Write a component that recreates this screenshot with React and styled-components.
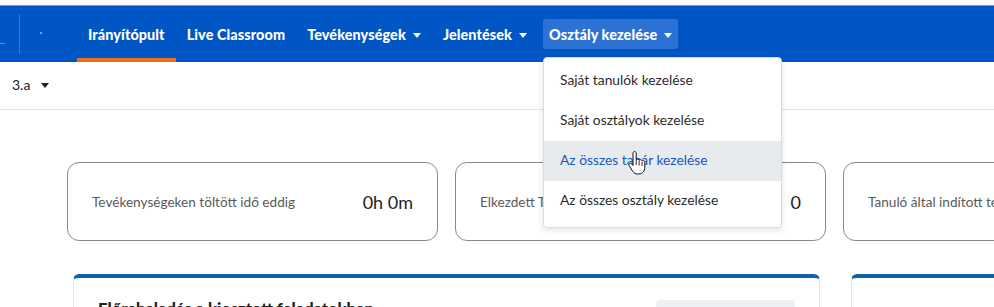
import React from 'react'
import styled, { createGlobalStyle } from 'styled-components'

const GlobalStyle = createGlobalStyle`
  body {
    margin: 0;
    background: #ffffff;
    font-family: Lato, "Noto Sans", sans-serif;
    overflow: hidden;
  }
`

const Page = styled.div`
  width: 994px;
  height: 307px;
  overflow: hidden;
  position: relative;
`

const TopStrip = styled.div`
  height: 5px;
  background: #ffffff;
  border-bottom: 1px solid #6f9be0;
`

const NavBar = styled.nav`
  height: 56px;
  background: #0156c6;
  display: flex;
  align-items: stretch;
`

const Brand = styled.div`
  width: 77px;
  flex: 0 0 77px;
  display: flex;
  align-items: center;
`

const BrandMark = styled.span`
  width: 5px;
  height: 1px;
  background: #7c8fb0;
  margin-top: 18px;
`

const Divider = styled.span`
  width: 1px;
  height: 40px;
  margin-left: 14px;
  background: rgba(255, 255, 255, 0.22);
`

const Dot = styled.span`
  width: 2px;
  height: 2px;
  margin-left: 20px;
  margin-bottom: 2px;
  background: rgba(255, 255, 255, 0.45);
`

const NavItem = styled.div`
  padding: 0 11px;
  display: flex;
  align-items: center;
  color: #ffffff;
  font-weight: 900;
  font-size: 14.4px;
  letter-spacing: 0.1px;
  white-space: nowrap;
  box-sizing: border-box;
  border-bottom: 4px solid ${(p) => (p.$active ? '#f26b1d' : 'transparent')};
  border-top: 4px solid transparent;
`

const NavLabel = styled.span`
  position: relative;
  display: flex;
  align-items: center;
  gap: 7px;
  height: 30px;
  padding: 0 6px;
  margin: 0 -6px;
  border-radius: 3px;
  background: ${(p) => (p.$open ? '#2b72d4' : 'transparent')};
`

const Caret = styled.span`
  width: 0;
  height: 0;
  border-left: 4px solid transparent;
  border-right: 4px solid transparent;
  border-top: 5px solid ${(p) => p.$color || '#ffffff'};
  margin-top: 2px;
`

const Menu = styled.div`
  position: absolute;
  top: 38px;
  left: 0;
  width: 239px;
  box-sizing: border-box;
  padding: 3px 0 6px;
  background: #ffffff;
  border: 1px solid #d9dcdf;
  border-radius: 4px;
  box-shadow: 0 2px 6px rgba(0, 0, 0, 0.12);
  z-index: 5;
`

const MenuItem = styled.div`
  height: 40px;
  box-sizing: border-box;
  display: flex;
  align-items: center;
  padding: 0 16px 3px;
  font-weight: 400;
  font-size: 13.8px;
  letter-spacing: 0;
  color: ${(p) => (p.$hover ? '#1a57b9' : '#2b2b2b')};
  background: ${(p) => (p.$hover ? '#e8ebee' : 'transparent')};
  position: relative;
`

const Cursor = styled.svg`
  position: absolute;
  left: 84px;
  top: 10px;
`

const SubBar = styled.div`
  height: 48px;
  border-bottom: 1px solid #e4e4e4;
  display: flex;
  align-items: center;
  padding: 0 0 2px 12px;
  box-sizing: border-box;
  gap: 11px;
  font-size: 14px;
  color: #222;
`

const CardRow = styled.div`
  display: flex;
  gap: 17px;
  padding: 52px 0 0 67px;
`

const StatCard = styled.div`
  flex: 0 0 371px;
  height: 79px;
  box-sizing: border-box;
  border: 1px solid #8a8a8a;
  border-radius: 12px;
  display: flex;
  align-items: center;
  justify-content: space-between;
  padding: 0 24px 0 24px;
  overflow: hidden;
`

const StatLabel = styled.span`
  font-size: 13.6px;
  color: #5a5a5a;
  white-space: nowrap;
`

const StatValue = styled.span`
  font-size: 18px;
  color: #1e1e1e;
  white-space: nowrap;
`

const PanelRow = styled.div`
  display: flex;
  gap: 31px;
  padding: 33px 0 0 73px;
`

const Panel = styled.div`
  flex: 0 0 747px;
  height: 80px;
  box-sizing: border-box;
  border: 1px solid #e3e5e8;
  border-top: 4px solid #1262ab;
  border-radius: 6px 6px 0 0;
  display: flex;
  justify-content: space-between;
  align-items: flex-start;
  padding: 21px 24px 0 24px;
`

const PanelTitle = styled.span`
  font-size: 16.5px;
  font-weight: 900;
  color: #222;
  white-space: nowrap;
`

const PanelButton = styled.span`
  width: 139px;
  height: 34px;
  border-radius: 4px;
  background: #eef1f4;
  margin-top: 1px;
`

const menuItems = [
  'Saját tanulók kezelése',
  'Saját osztályok kezelése',
  'Az összes tanár kezelése',
  'Az összes osztály kezelése',
]

const HandCursor = () => (
  <Cursor width="18" height="24" viewBox="0 0 18 24">
    <path
      d="M5 2.2c0-1 .7-1.7 1.6-1.7S8.2 1.2 8.2 2.2V9c.3-.6.8-.9 1.4-.9.8 0 1.4.6 1.5 1.3.3-.5.8-.8 1.4-.8.8 0 1.5.7 1.5 1.5.3-.3.7-.5 1.2-.5.9 0 1.6.7 1.6 1.6v5.2c0 3.6-2.4 6.6-6 6.6H9.5c-2 0-3.4-.8-4.6-2.4L1.2 14.7c-.5-.7-.4-1.7.3-2.2.7-.5 1.6-.3 2.1.3L5 14.5V2.2z"
      fill="#ffffff"
      stroke="#111"
      strokeWidth="1"
    />
    <path d="M8.2 9v5M11.1 10v4.5M14 11v4" stroke="#111" strokeWidth="0.9" />
  </Cursor>
)

const App = () => {
  return (
    <Page>
      <GlobalStyle />
      <TopStrip />
      <NavBar>
        <Brand>
          <BrandMark />
          <Divider />
          <Dot />
        </Brand>
        <NavItem $active>
          <NavLabel>Irányítópult</NavLabel>
        </NavItem>
        <NavItem>
          <NavLabel>Live Classroom</NavLabel>
        </NavItem>
        <NavItem>
          <NavLabel>
            Tevékenységek <Caret />
          </NavLabel>
        </NavItem>
        <NavItem>
          <NavLabel>
            Jelentések <Caret />
          </NavLabel>
        </NavItem>
        <NavItem>
          <NavLabel $open>
            Osztály kezelése <Caret />
            <Menu>
              {menuItems.map((item, i) => (
                <MenuItem key={item} $hover={i === 2}>
                  {item}
                  {i === 2 && <HandCursor />}
                </MenuItem>
              ))}
            </Menu>
          </NavLabel>
        </NavItem>
      </NavBar>
      <SubBar>
        3.a <Caret $color="#222" />
      </SubBar>
      <CardRow>
        <StatCard>
          <StatLabel>Tevékenységeken töltött idő eddig</StatLabel>
          <StatValue>0h 0m</StatValue>
        </StatCard>
        <StatCard>
          <StatLabel>Elkezdett Tevékenységek</StatLabel>
          <StatValue>0</StatValue>
        </StatCard>
        <StatCard>
          <StatLabel>Tanuló által indított tevékenységek</StatLabel>
          <StatValue>0</StatValue>
        </StatCard>
      </CardRow>
      <PanelRow>
        <Panel>
          <PanelTitle>Előrehaladás a kiosztott feladatokban</PanelTitle>
          <PanelButton />
        </Panel>
        <Panel />
      </PanelRow>
    </Page>
  )
}

export default App
